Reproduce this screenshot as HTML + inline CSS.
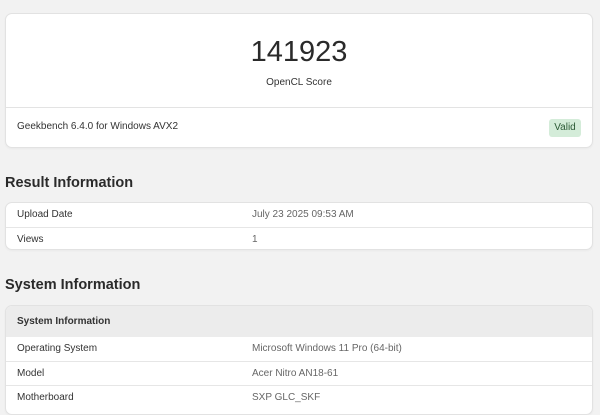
<!DOCTYPE html>
<html><head><meta charset="utf-8"><style>
*{margin:0;padding:0;box-sizing:border-box}
body{width:600px;height:400px;overflow:hidden;background:#f2f2f2;font-family:"Liberation Sans",Arial,sans-serif;color:#333;position:relative}
.card{position:absolute;left:5px;width:588px;background:#fff;border:1px solid #e2e2e2;border-radius:7px;overflow:hidden;box-shadow:0 1px 2px rgba(0,0,0,.04)}
.abs{position:absolute}
.h{position:absolute;left:5px;font-size:14.5px;font-weight:bold;color:#2a2a2a}
.row{position:absolute;left:0;right:0;height:24px;font-size:10px;line-height:24px}
.row .l{position:absolute;left:11px}
.row .v{position:absolute;left:246px;color:#666}
.bt{border-top:1px solid #e6e6e6}
</style></head><body>
<div class="card" style="top:13px;height:135px">
  <div class="abs" style="top:22px;left:0;right:0;text-align:center;font-size:29px;color:#2a2a2a">141923</div>
  <div class="abs" style="top:63px;left:0;right:0;text-align:center;font-size:10px;color:#333">OpenCL Score</div>
  <div class="abs" style="top:93px;left:0;right:0;border-top:1px solid #e3e3e3"></div>
  <div class="abs" style="top:107px;left:11px;font-size:10px">Geekbench 6.4.0 for Windows AVX2</div>
  <div class="abs" style="top:105px;left:543px;width:32px;height:18px;background:#d4ecd9;border-radius:3px;font-size:10px;line-height:18px;text-align:center;color:#2b5a35">Valid</div>
</div>
<div class="h" style="top:175px">Result Information</div>
<div class="card" style="top:202px;height:48px">
  <div class="row" style="top:0"><span class="l">Upload Date</span><span class="v">July 23 2025 09:53 AM</span></div>
  <div class="row bt" style="top:24px"><span class="l">Views</span><span class="v">1</span></div>
</div>
<div class="h" style="top:277px">System Information</div>
<div class="card" style="top:305px;height:110px">
  <div class="row" style="top:0;height:31px;line-height:31px;background:#ececec;font-weight:bold"><span class="l">System Information</span></div>
  <div class="row" style="top:31px"><span class="l">Operating System</span><span class="v">Microsoft Windows 11 Pro (64-bit)</span></div>
  <div class="row bt" style="top:55px"><span class="l">Model</span><span class="v">Acer Nitro AN18-61</span></div>
  <div class="row bt" style="top:79px"><span class="l">Motherboard</span><span class="v">SXP GLC_SKF</span></div>
</div>
</body></html>
